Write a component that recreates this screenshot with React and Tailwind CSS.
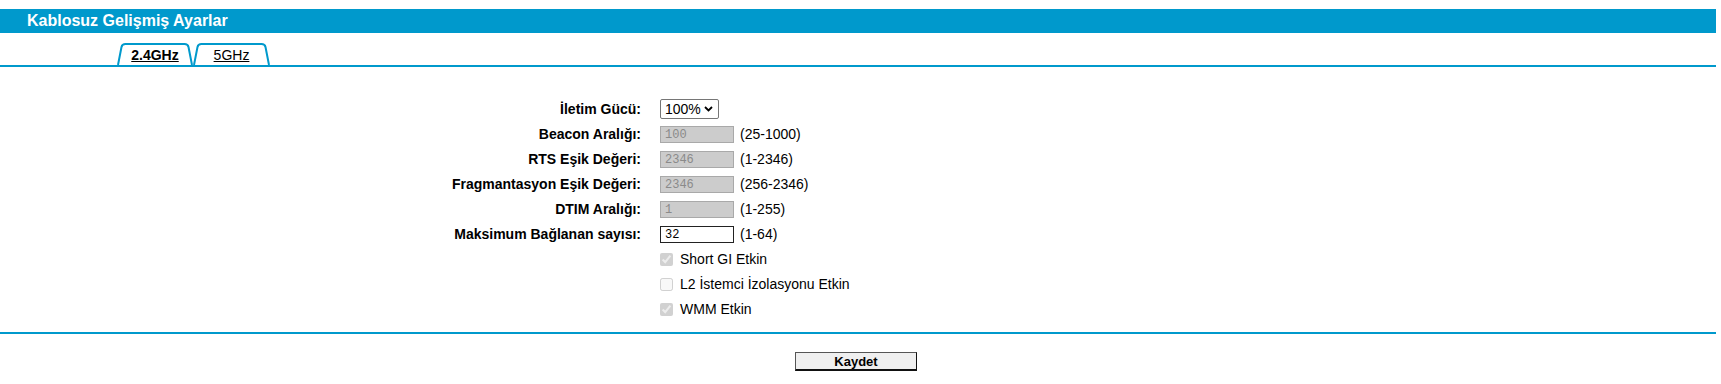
import React from "react";

function Tab({ label, active, width }) {
  const w = width;
  return (
    <a href="#" className="relative flex h-[22px] items-center justify-center pt-[2px] text-black underline" style={{ width: w }}>
      <svg className="absolute inset-0" width={w} height="22" viewBox={`0 0 ${w} 22`}>
        <path
          d={`M1 22 L4.5 4 Q5.2 1 8.5 1 L${w - 8.5} 1 Q${w - 5.2} 1 ${w - 4.5} 4 L${w - 1} 22`}
          fill="white"
          stroke="#0099cc"
          strokeWidth="2"
        />
      </svg>
      <span className={`relative text-[14px] ${active ? "font-bold" : ""}`}>{label}</span>
    </a>
  );
}

function TextRow({ label, value, range, disabled = true }) {
  return (
    <>
      <div className="flex h-[25px] items-center justify-end font-bold">{label}</div>
      <div className="flex h-[25px] items-center">
        <div
          className={`flex h-[17px] w-[74px] items-center border pl-[4px] font-['Liberation_Mono',monospace] text-[12px] ${
            disabled ? "border-[#a9a9a9] bg-[#cccccc] text-[#8a8a8a]" : "border-[#222] bg-white pl-[3px] text-black"
          }`}
        >
          {value}
        </div>
        <span className="ml-[6px]">{range}</span>
      </div>
    </>
  );
}

function CheckRow({ label, checked }) {
  return (
    <>
      <div className="h-[25px]" />
      <div className="flex h-[25px] items-center">
        <input type="checkbox" disabled defaultChecked={checked} className="m-0 h-[13px] w-[13px]" />
        <span className="ml-[7px]">{label}</span>
      </div>
    </>
  );
}

export default function App() {
  return (
    <div className="w-[1716px] bg-white pt-[9px] font-['Liberation_Sans',Arial,sans-serif] text-[14px] text-black">
      <div className="flex h-[24px] items-center bg-[#0099cc] pl-[27px] text-[16px] font-bold text-white">
        Kablosuz Gelişmiş Ayarlar
      </div>

      <div className="mt-[10px] flex border-b-2 border-[#0099cc] pl-[117px]">
        <Tab label="2.4GHz" active width={76} />
        <Tab label="5GHz" width={77} />
      </div>

      <div className="mt-[29px] grid grid-cols-[641px_auto] gap-x-[19px]">
        <div className="flex h-[26px] items-center justify-end font-bold">İletim Gücü:</div>
        <div className="flex h-[26px] items-center">
          <div className="flex h-[20px] w-[59px] items-center justify-between rounded-[2px] border border-[#767676] bg-white pl-[4px] pr-[5px]">
            <span>100%</span>
            <svg width="9" height="6" viewBox="0 0 9 6">
              <polyline points="1,1 4.5,4.5 8,1" fill="none" stroke="black" strokeWidth="1.8" />
            </svg>
          </div>
        </div>
        <TextRow label="Beacon Aralığı:" value="100" range="(25-1000)" />
        <TextRow label="RTS Eşik Değeri:" value="2346" range="(1-2346)" />
        <TextRow label="Fragmantasyon Eşik Değeri:" value="2346" range="(256-2346)" />
        <TextRow label="DTIM Aralığı:" value="1" range="(1-255)" />
        <TextRow label="Maksimum Bağlanan sayısı:" value="32" range="(1-64)" disabled={false} />
        <CheckRow label="Short GI Etkin" checked />
        <CheckRow label="L2 İstemci İzolasyonu Etkin" checked={false} />
        <CheckRow label="WMM Etkin" checked />
      </div>

      <div className="mt-[10px] h-[2px] bg-[#0099cc]" />

      <div className="mt-[18px] flex justify-center pb-[13px] pr-[4px]">
        <button className="h-[19px] w-[122px] border border-[#555] border-b-2 border-b-[#111] border-r-[#111] bg-[#efefef] text-[13px] font-bold leading-none">
          Kaydet
        </button>
      </div>
    </div>
  );
}
